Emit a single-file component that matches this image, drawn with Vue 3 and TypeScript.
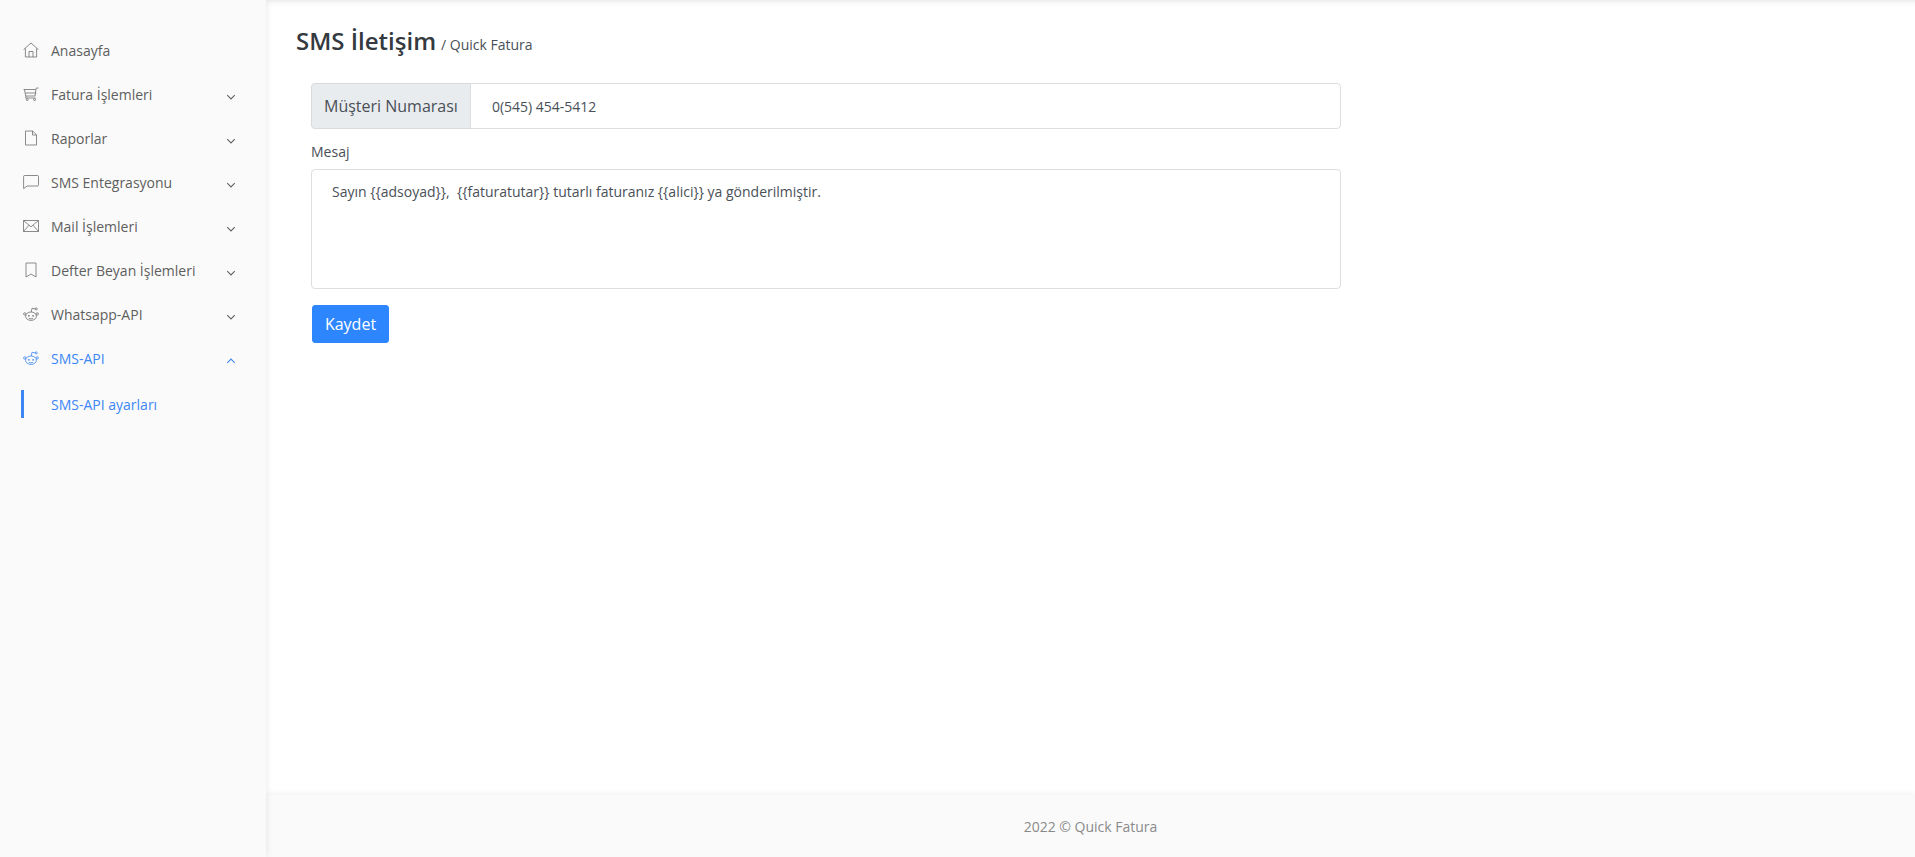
<script setup lang="ts">
interface Item { label: string; icon: string; chevron?: 'down' | 'up'; active?: boolean }
const items: Item[] = [
  { label: 'Anasayfa', icon: 'house' },
  { label: 'Fatura İşlemleri', icon: 'cart', chevron: 'down' },
  { label: 'Raporlar', icon: 'file', chevron: 'down' },
  { label: 'SMS Entegrasyonu', icon: 'chat', chevron: 'down' },
  { label: 'Mail İşlemleri', icon: 'mail', chevron: 'down' },
  { label: 'Defter Beyan İşlemleri', icon: 'bookmark', chevron: 'down' },
  { label: 'Whatsapp-API', icon: 'reddit', chevron: 'down' },
  { label: 'SMS-API', icon: 'reddit', chevron: 'up', active: true },
]
const message = 'Sayın {{adsoyad}},  {{faturatutar}} tutarlı faturanız {{alici}} ya gönderilmiştir.'
</script>

<template>
  <div class="shell">
    <aside class="sidebar">
      <nav class="menu">
        <a v-for="item in items" :key="item.label" class="row" :class="{ active: item.active }">
          <svg class="ico" viewBox="0 0 16 16" fill="none" stroke="currentColor" stroke-width="0.8">
            <template v-if="item.icon === 'house'">
              <path d="M0.6 7.6 8 1l7.4 6.600M2.400 6.400V15h11.200V6.400M6 15V9.500h4V15" />
            </template>
            <template v-else-if="item.icon === 'cart'">
              <path d="M0.500 3.500h12.300l.6-1.500h2.100M1.500 3.500l1.200 6.500h9.400l.8-6.500M2.400 7h10.800M3 10l-.3 2h10" />
              <circle cx="4.200" cy="13.600" r="1" /><circle cx="11.600" cy="13.600" r="1" />
            </template>
            <template v-else-if="item.icon === 'file'">
              <path d="M2.500 1h7.200l3.800 3.800V15h-11zM9.500 1v4h4" />
            </template>
            <template v-else-if="item.icon === 'chat'">
              <path d="M1.800 1.500h12.600a1.100 1.100 0 0 1 1.100 1.100v8.300a1.100 1.100 0 0 1-1.100 1.100H4.200L.6 14.600V2.600a1.100 1.100 0 0 1 1.200-1.100z" />
            </template>
            <template v-else-if="item.icon === 'mail'">
              <path d="M.5 2.500h15v11H.5zM.5 2.500 8 8.800l7.500-6.300M.5 13.500 6 7.200M15.500 13.500 10 7.200" />
            </template>
            <template v-else-if="item.icon === 'bookmark'">
              <path d="M3 1h10v14l-5-3-5 3z" />
            </template>
            <template v-else>
              <ellipse cx="8" cy="10.200" rx="5.400" ry="4.200" />
              <circle cx="1.800" cy="7.900" r="1.200" /><circle cx="14.200" cy="7.900" r="1.200" />
              <circle cx="13.200" cy="2.900" r="1.050" />
              <path d="M8.200 6 9 2.300l3.200.6M5.900 12.300c1.300.7 2.900.7 4.200 0" />
              <circle cx="5.900" cy="9.800" r=".85" fill="currentColor" stroke="none" /><circle cx="10.100" cy="9.800" r=".85" fill="currentColor" stroke="none" />
            </template>
          </svg>
          <span class="label">{{ item.label }}</span>
          <svg v-if="item.chevron" class="chev" viewBox="0 0 16 16" fill="none" stroke="currentColor" stroke-width="1.700">
            <path v-if="item.chevron === 'down'" d="M2 5 8 11l6-6" />
            <path v-else d="M2 11 8 5l6 6" />
          </svg>
        </a>
        <a class="sub">SMS-API ayarları</a>
      </nav>
    </aside>

    <div class="main">
      <main class="content">
        <header class="title">
          <h1>SMS İletişim</h1>
          <span class="crumb">/ Quick Fatura</span>
        </header>
        <form class="form" @submit.prevent>
          <div class="group">
            <span class="addon">Müşteri Numarası</span>
            <input class="field" type="text" value="0(545) 454-5412" />
          </div>
          <label class="cap" for="mesaj">Mesaj</label>
          <textarea id="mesaj" class="area" :value="message"></textarea>
          <button class="save" type="submit">Kaydet</button>
        </form>
      </main>
      <footer class="footer">2022 © Quick Fatura</footer>
    </div>
  </div>
</template>

<style>
html, body { margin: 0; background: #fff; }
</style>

<style scoped>
.shell {
  display: flex;
  height: 857px;
  overflow: hidden;
  font-family: "Open Sans", sans-serif;
  color: #495057;
}
.sidebar {
  width: 266px;
  flex: none;
  background: #fafafa;
  box-shadow: 0 0 7px rgba(0, 0, 0, 0.1);
  position: relative;
  z-index: 2;
  padding-top: 28px;
  box-sizing: border-box;
}
.menu { display: flex; flex-direction: column; }
.row {
  display: flex;
  align-items: center;
  height: 44px;
  padding: 0 30px 0 23px;
  font-size: 14px;
  color: #5e5e5e;
}
.row.active, .sub { color: #3d87f5; }
.ico { width: 16px; height: 16px; flex: none; color: #6f6f6f; }
.row.active .ico { color: #3d87f5; }
.label { margin-left: 12px; flex: 1; }
.chev { width: 10px; height: 10px; flex: none; margin-top: 5px; }
.sub {
  display: flex;
  align-items: center;
  height: 28px;
  margin: 10px 0 0 21px;
  padding-left: 27px;
  border-left: 3px solid #3d87f5;
  font-size: 14px;
  font-weight: 500;
}
.main {
  flex: 1;
  min-width: 0;
  display: flex;
  flex-direction: column;
  position: relative;
  box-shadow: inset 0 7px 7px -7px rgba(0, 0, 0, 0.14);
}
.content { flex: 1; padding: 23px 16px 0 30px; }
.title { display: flex; align-items: baseline; gap: 5px; height: 36px; }
.title h1 {
  margin: 0;
  font-size: 24px;
  font-weight: 600;
  line-height: 36px;
  color: #343a40;
}
.crumb { font-size: 14px; color: #495057; }
.form { width: 1030px; margin: 24px 0 0 15px; display: flex; flex-direction: column; }
.group { display: flex; height: 46px; }
.addon {
  display: flex;
  align-items: center;
  padding: 0 12px;
  background: #e9ecef;
  border: 1px solid #d8dadd;
  border-radius: 4px 0 0 4px;
  font-size: 16px;
  color: #495057;
}
.field, .area {
  font-family: inherit;
  color: #495057;
  font-size: 14px;
  border: 1px solid #dedede;
  outline: none;
  box-sizing: border-box;
  background: #fff;
}
.field {
  flex: 1;
  min-width: 0;
  margin-left: -1px;
  padding: 0 21px;
  border-radius: 0 4px 4px 0;
}
.cap { font-size: 14px; color: #495057; line-height: 20px; margin: 13px 0 7px; height: 20px; }
.area {
  height: 120px;
  padding: 12px 20px;
  border-radius: 4px;
  resize: none;
  display: block;
  width: 100%;
}
.save {
  align-self: flex-start;
  margin-top: 16px;
  margin-left: 1px;
  width: 77px;
  height: 38px;
  border: 1px solid #2e86ff;
  border-radius: 3px;
  background: #2e86ff;
  color: #fff;
  font-family: inherit;
  font-size: 16px;
  font-weight: 500;
}
.footer {
  height: 62px;
  flex: none;
  display: flex;
  align-items: center;
  justify-content: center;
  background: #fafafa;
  box-shadow: 0 0 7px rgba(0, 0, 0, 0.09);
  font-size: 14px;
  color: #8a8a8a;
}
</style>
